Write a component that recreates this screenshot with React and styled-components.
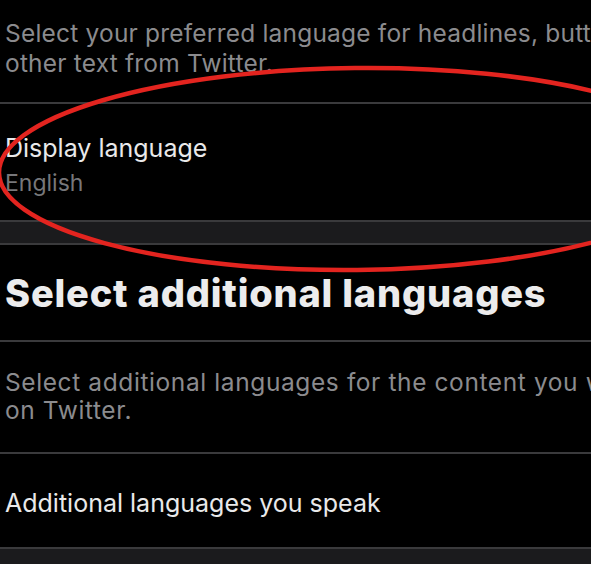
import React from 'react'
import styled, { createGlobalStyle } from 'styled-components'

const GlobalStyle = createGlobalStyle`
    html, body {
        margin: 0;
        padding: 0;
        background: #000;
    }
    body {
        font-family: Inter, "Noto Sans", sans-serif;
        -webkit-font-smoothing: antialiased;
    }
`

const App = () => {
    return (
        <>
            <GlobalStyle />
            <Screen>
                <Note top={18} lineHeight={30} height={102}>
                    <span>Select your preferred language for headlines, buttons, and</span>
                    <span>other text from Twitter.</span>
                </Note>

                <Cell height={118} top={28}>
                    <CellTitle>Display language</CellTitle>
                    <CellValue>English</CellValue>
                </Cell>

                <Gap height={25} />

                <Heading>Select additional languages</Heading>

                <Note top={26} lineHeight={28} height={112} spacing={0.6} bordered>
                    <span>Select additional languages for the content you want to see</span>
                    <span>on Twitter.</span>
                </Note>

                <Cell height={95} top={33}>
                    <CellTitle>Additional languages you speak</CellTitle>
                </Cell>

                <Gap height={20} />

                {/* red hand-drawn circle around the display language row */}
                <Marker viewBox="0 0 591 564" width="591" height="564">
                    <ellipse
                        cx="356"
                        cy="169"
                        rx="357"
                        ry="101"
                        fill="none"
                        stroke="#e3241f"
                        strokeWidth="4.5"
                        transform="rotate(-0.6 356 169)"
                    />
                </Marker>
            </Screen>
        </>
    )
}

const Screen = styled.div`
    position: relative;
    width: 591px;
    height: 564px;
    overflow: hidden;
    background: #000;
`

const Note = styled.div`
    box-sizing: border-box;
    height: ${({height}) => height}px;
    padding: ${({top}) => top}px 0 0 5px;
    border-top: ${({bordered}) => bordered ? '2px solid #3a3a3c' : 'none'};
    display: flex;
    flex-direction: column;
    font-size: 24.5px;
    line-height: ${({lineHeight}) => lineHeight}px;
    letter-spacing: ${({spacing = 0.2}) => spacing}px;
    color: #8b8b8e;
    white-space: nowrap;
`

const Cell = styled.div`
    box-sizing: border-box;
    height: ${({height}) => height}px;
    padding: ${({top}) => top}px 0 0 5px;
    border-top: 2px solid #3a3a3c;
    display: flex;
    flex-direction: column;
    gap: 4px;
`

const CellTitle = styled.div`
    font-size: 25px;
    line-height: 32px;
    color: #e9e9ea;
    white-space: nowrap;
`

const CellValue = styled.div`
    font-size: 23px;
    line-height: 30px;
    color: #77777a;
`

const Gap = styled.div`
    box-sizing: border-box;
    height: ${({height}) => height}px;
    background: #1b1b1d;
    border-top: 2px solid #3a3a3c;
    border-bottom: 2px solid #3a3a3c;
`

const Heading = styled.h2`
    box-sizing: border-box;
    height: 95px;
    margin: 0;
    padding: 26px 0 0 5px;
    font-size: 38px;
    line-height: 44px;
    font-weight: 800;
    letter-spacing: 0.8px;
    color: #ececed;
    white-space: nowrap;
`

const Marker = styled.svg`
    position: absolute;
    left: 0;
    top: 0;
    pointer-events: none;
`

export default App
